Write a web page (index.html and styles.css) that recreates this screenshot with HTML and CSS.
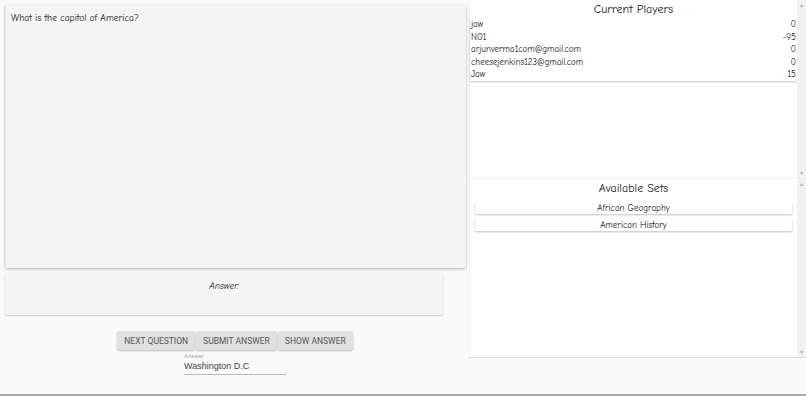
FILE: index.html
```html
<!DOCTYPE html>
<html lang="en">
<head>
  <meta charset="UTF-8" />
  <meta name="viewport" content="width=device-width, initial-scale=1.0"/>
  <title>Trivia Game</title>
  <link rel="stylesheet" href="styles.css">
</head>
<body>

  <div class="page">
    <section class="game">
      <div class="question-card">
        <p>What is the capitol of America?</p>
      </div>

      <div class="answer-card">
        <p>Answer:</p>
      </div>

      <div class="controls">
        <div class="button-group">
          <button>Next Question</button>
          <button>Submit Answer</button>
          <button>Show Answer</button>
        </div>
        <label class="answer-field">
          <span>Answer</span>
          <input type="text" value="Washington D.C" />
        </label>
      </div>
    </section>

    <aside class="sidebar">
      <div class="panel">
        <div class="panel-body">
          <h2>Current Players</h2>
          <ul class="players">
            <li><span>jaw</span><span>0</span></li>
            <li><span>NO1</span><span>-95</span></li>
            <li><span>arjunverma1com@gmail.com</span><span>0</span></li>
            <li><span>cheesejenkins123@gmail.com</span><span>0</span></li>
            <li><span>Jaw</span><span>15</span></li>
          </ul>
        </div>
        <div class="scrollbar"><span>&#9652;</span><span>&#9662;</span></div>
      </div>

      <div class="panel">
        <div class="panel-body">
          <h2>Available Sets</h2>
          <ul class="sets">
            <li>African Geography</li>
            <li>American History</li>
          </ul>
        </div>
        <div class="scrollbar"><span>&#9652;</span><span>&#9662;</span></div>
      </div>
    </aside>
  </div>

  <div class="bottom-bar"></div>

</body>
</html>
```

FILE: styles.css
```css
body {
  margin: 0;
  padding: 0;
  height: 396px;
  display: flex;
  flex-direction: column;
  background-color: #fafafa;
  font-family: "Comic Sans MS", "Comic Neue", "DejaVu Sans Condensed", "Liberation Sans", sans-serif;
  color: #222;
  overflow: hidden;
}

.page {
  flex: 1;
  display: grid;
  grid-template-columns: 469px 1fr;
}

/* left side */
.game {
  padding: 5px 0 0 5px;
}

.question-card {
  width: 461px;
  height: 263px;
  background-color: #f4f4f4;
  box-shadow: 0 1px 3px rgba(0, 0, 0, 0.3);
  border-left: 1px solid #e4e4e4;
  border-radius: 2px;
  box-sizing: border-box;
}

.question-card p {
  margin: 0;
  padding: 7px 5px;
  font-size: 9.5px;
}

.answer-card {
  width: 438px;
  height: 42px;
  margin-top: 5px;
  background-color: #f4f4f4;
  box-shadow: 0 1px 2px rgba(0, 0, 0, 0.2);
  border-radius: 2px;
}

.answer-card p {
  margin: 0;
  padding-top: 7px;
  text-align: center;
  font-size: 9.5px;
  font-style: italic;
}

.controls {
  width: 460px;
  margin-top: 16px;
  display: flex;
  flex-direction: column;
  align-items: center;
}

.button-group {
  display: flex;
  gap: 1px;
}

.button-group button {
  height: 19px;
  padding: 0 7px;
  border: none;
  border-radius: 2px;
  background-color: #e0e0e0;
  box-shadow: 0 1px 2px rgba(0, 0, 0, 0.25);
  font-family: Roboto, "Liberation Sans", sans-serif;
  font-size: 8.5px;
  font-weight: 400;
  color: #555;
  text-transform: uppercase;
}

.answer-field {
  display: flex;
  flex-direction: column;
  width: 102px;
  margin-top: 2px;
}

.answer-field span {
  font-family: Roboto, "Liberation Sans", sans-serif;
  font-size: 6px;
  color: #aaa;
}

.answer-field input {
  border: none;
  border-bottom: 1px solid #bbb;
  background: transparent;
  padding: 2px 0 3px;
  font-family: "Liberation Sans", Arial, sans-serif;
  font-size: 9px;
  color: #444;
  outline: none;
}

/* right side */
.sidebar {
  display: flex;
  flex-direction: column;
}

.panel {
  height: 178px;
  display: flex;
  border-bottom: 1px solid #f0f0f0;
}

.panel + .panel {
  height: 178px;
  border-bottom: 1px solid #ddd;
}

.panel-body {
  flex: 1;
  background-color: #fff;
  border-left: 1px solid #f0f0f0;
}

.panel h2 {
  margin: 0;
  font-size: 12px;
  font-weight: normal;
  text-align: center;
  line-height: 18px;
}

.panel + .panel h2 {
  padding-top: 1px;
  line-height: 16px;
}

.players {
  list-style: none;
  margin: 0;
  padding: 0;
  box-shadow: 0 1px 2px rgba(0, 0, 0, 0.25);
}

.players li {
  display: flex;
  justify-content: space-between;
  padding: 0 1px;
  height: 12.6px;
  line-height: 12.6px;
  font-size: 9px;
}

.sets {
  list-style: none;
  margin: 6px 5px 0;
  padding: 0;
}

.sets li {
  height: 12px;
  line-height: 12px;
  margin-bottom: 5px;
  text-align: center;
  font-size: 9px;
  box-shadow: 0 1px 2px rgba(0, 0, 0, 0.25);
}

.scrollbar {
  width: 9px;
  background-color: #f1f1f1;
  display: flex;
  flex-direction: column;
  justify-content: space-between;
  align-items: center;
  font-size: 6px;
  color: #aaa;
  padding: 1px 0;
}

.bottom-bar {
  height: 2px;
  background-color: #aaa;
}
```
